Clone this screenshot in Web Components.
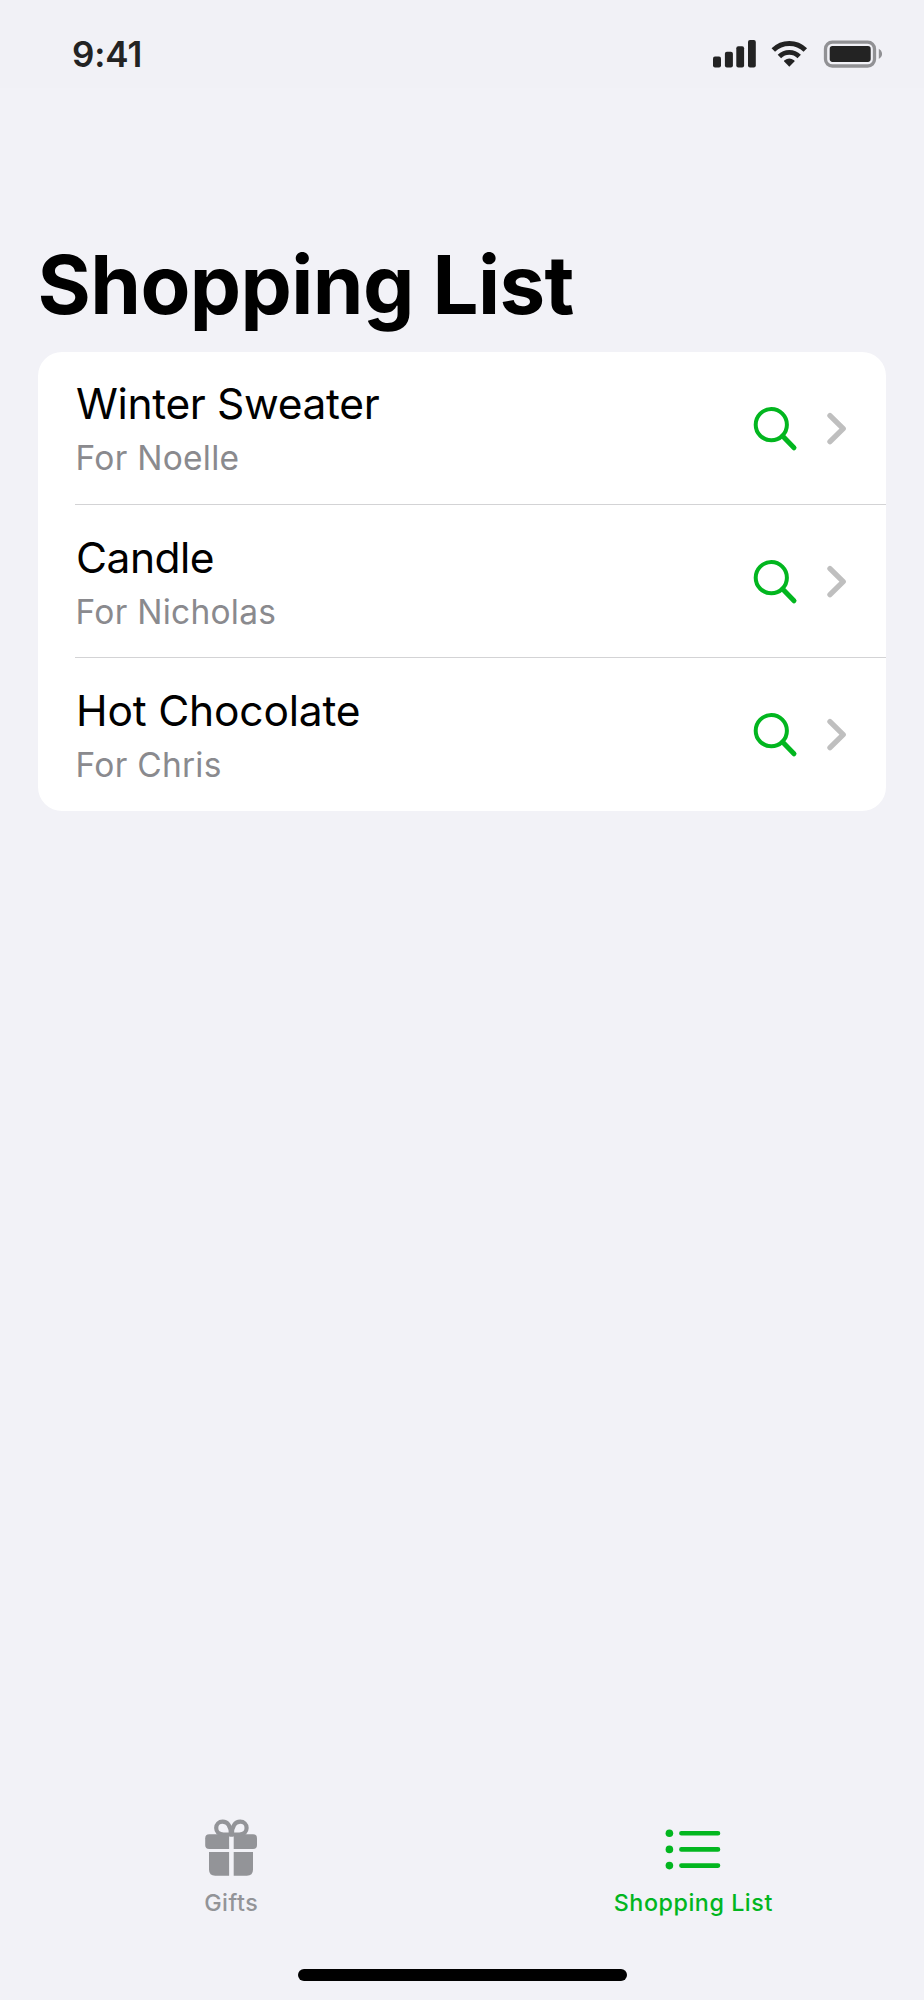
<!DOCTYPE html>
<html lang="en">
<head>
<meta charset="utf-8">
<title>Shopping List</title>
<style>
  html, body { margin: 0; height: 100%; }
  body { background: #f2f2f7; font-family: Inter, "Liberation Sans", sans-serif; color: #000; }
</style>
</head>
<body>
<app-screen>
  <status-bar slot="status">9:41</status-bar>
  <large-title slot="title">Shopping List</large-title>
  <gift-list>
    <gift-row style="--tracking:-.34px">Winter Sweater<span slot="for">For Noelle</span></gift-row>
    <gift-row style="--tracking:-.5px">Candle<span slot="for">For Nicholas</span></gift-row>
    <gift-row style="--tracking:-.18px" last>Hot Chocolate<span slot="for">For Chris</span></gift-row>
  </gift-list>
  <tab-bar slot="tabs">
    <tab-item icon="gift">Gifts</tab-item>
    <tab-item icon="list" active>Shopping List</tab-item>
  </tab-bar>
</app-screen>
<script>
const define = (name, html) => customElements.define(name, class extends HTMLElement {
  constructor() {
    super();
    this.attachShadow({ mode: 'open' }).innerHTML = typeof html === 'function' ? html(this) : html;
  }
});

define('app-screen', `
  <style>
    :host { display: flex; flex-direction: column; width: 924px; height: 2000px; overflow: hidden; }
    main { flex: 1; }
    .home { width: 329px; height: 12px; border-radius: 6px; background: #000; margin: 0 auto 19px; }
  </style>
  <slot name="status"></slot>
  <slot name="title"></slot>
  <main><slot></slot></main>
  <slot name="tabs"></slot>
  <div class="home"></div>`);

define('status-bar', `
  <style>
    :host { display: flex; justify-content: space-between; align-items: center; box-sizing: border-box;
      height: 88px; padding: 19px 42px 0 72px; background: #f1f1f6; color: #232323;
      font-size: 35px; font-weight: 560; line-height: 44px; letter-spacing: -.1px; }
    svg { display: block; margin-top: 1px; }
  </style>
  <span><slot></slot></span>
  <svg width="169" height="28" viewBox="713 40.5 169 28">
    <g fill="#232323">
      <rect x="713" y="57" width="8" height="11" rx="2"/>
      <rect x="724.9" y="52.3" width="8" height="15.7" rx="2"/>
      <rect x="736.3" y="46.7" width="7.8" height="21.3" rx="2"/>
      <rect x="748" y="40.6" width="7.8" height="27.4" rx="2"/>
      <path d="M789.3 67.2 L784.2 61.9 Q783.8 61.2 784.5 60.7 Q789.3 57.4 794.1 60.7 Q794.8 61.2 794.4 61.9Z"/>
      <rect x="829.7" y="46.6" width="41" height="15.8" rx="2.8"/>
    </g>
    <g fill="none" stroke="#232323">
      <path d="M773.3 50.6 A22.6 22.6 0 0 1 805.3 50.6" stroke-width="4.9"/>
      <path d="M779.4 57 A14 14 0 0 1 799.2 57" stroke-width="4.8"/>
    </g>
    <rect x="825.5" y="42.6" width="49" height="23.9" rx="6.8" fill="none" stroke="#919194" stroke-width="3.3"/>
    <path d="M878.8 49.2 Q882.1 51 882.1 54.3 Q882.1 57.6 878.8 59.4Z" fill="#919194"/>
  </svg>`);

define('large-title', `
  <style>
    :host { display: block; padding: 149px 38px 19px 37.5px; font-size: 81.5px; font-weight: 700;
      line-height: 96px; letter-spacing: -.6px; white-space: nowrap; height: 96px; flex: none; }
  </style>
  <slot></slot>`);

define('gift-list', `
  <style>
    :host { display: grid; grid-auto-rows: 153.3px; margin: -.5px 38px 0; background: #fff; border-radius: 24px; overflow: hidden; }
  </style>
  <slot></slot>`);

define('gift-row', `
  <style>
    :host { display: flex; padding-left: 37.3px; }
    .body { flex: 1; display: flex; justify-content: space-between; box-sizing: border-box;
      border-bottom: 1px solid #d3d3d5; }
    :host([last]) .body { border-bottom-color: transparent; }
    .text { padding-top: 25.8px; }
    .name, .for { white-space: nowrap; line-height: 54px; }
    .name { font-size: 42.5px; letter-spacing: var(--tracking); margin-left: .7px; }
    .for { font-size: 33.5px; letter-spacing: .25px; color: #8a8a8e; margin-left: .3px; }
    svg { display: block; margin: 52px 35px 0 0; flex: none; }
  </style>
  <div class="body">
    <div class="text">
      <div class="name"><slot></slot></div>
      <div class="for"><slot name="for"></slot></div>
    </div>
    <svg width="99" height="50" viewBox="752 403.5 99 50" fill="none" stroke-linecap="round" stroke-linejoin="round">
      <circle cx="771.3" cy="424.2" r="15.6" stroke="#02b61f" stroke-width="4"/>
      <path d="M782.6 435.6 L794 447.3" stroke="#02b61f" stroke-width="5"/>
      <path d="M830 415.1 L843.2 428.1 L830 441.1" stroke="#bfbfbf" stroke-width="5.4"/>
    </svg>
  </div>`);

define('tab-bar', `
  <style>
    :host { display: grid; grid-template-columns: 1fr 1fr; height: 159px; }
  </style>
  <slot></slot>`);

const icons = {
  gift: `<svg width="60" height="62" viewBox="201 1816 60 62">
    <g fill="none" stroke="currentColor" stroke-width="4.2">
      <path d="M230.9 1834.5 H223.5 C218.8 1834.5 216.2 1831.7 216.2 1828 C216.2 1824.4 218.9 1821.7 222.6 1821.7 C227.6 1821.7 230.9 1826 230.9 1834.5Z"/>
      <path d="M231.9 1834.5 H239.3 C244 1834.5 246.6 1831.7 246.6 1828 C246.6 1824.4 243.9 1821.7 240.2 1821.7 C235.2 1821.7 231.9 1826 231.9 1834.5Z"/>
    </g>
    <g fill="currentColor">
      <path d="M229.1 1834.3 V1849 H209.2 Q205.2 1849 205.2 1845 V1838.3 Q205.2 1834.3 209.2 1834.3Z"/>
      <path d="M233.7 1834.3 V1849 H253 Q257 1849 257 1845 V1838.3 Q257 1834.3 253 1834.3Z"/>
      <path d="M229.1 1852 V1875.7 H215.2 Q209 1875.7 209 1869.5 V1852Z"/>
      <path d="M233.7 1852 V1875.7 H246.8 Q253 1875.7 253 1869.5 V1852Z"/>
    </g></svg>`,
  list: `<svg width="60" height="62" viewBox="663.3 1816 60 62">
    <g fill="currentColor"><circle cx="669.7" cy="1833.2" r="3.8"/><circle cx="669.7" cy="1849.4" r="3.8"/><circle cx="669.7" cy="1865.6" r="3.8"/></g>
    <path d="M681.7 1833.2 H718.3 M681.7 1849.4 H718.3 M681.7 1865.6 H718.3" stroke="currentColor" stroke-width="4.6" stroke-linecap="round"/></svg>`
};

define('tab-item', el => `
  <style>
    :host { display: flex; flex-direction: column; align-items: center; padding-top: 6px; color: #939498;
      font-size: 23.3px; font-weight: 480; line-height: 30px; letter-spacing: .55px; }
    :host([active]) { color: #02b61f; }
    svg { display: block; }
    span { margin-top: 10px; padding-left: .6px; }
  </style>
  ${icons[el.getAttribute('icon')]}
  <span><slot></slot></span>`);
</script>
</body>
</html>
